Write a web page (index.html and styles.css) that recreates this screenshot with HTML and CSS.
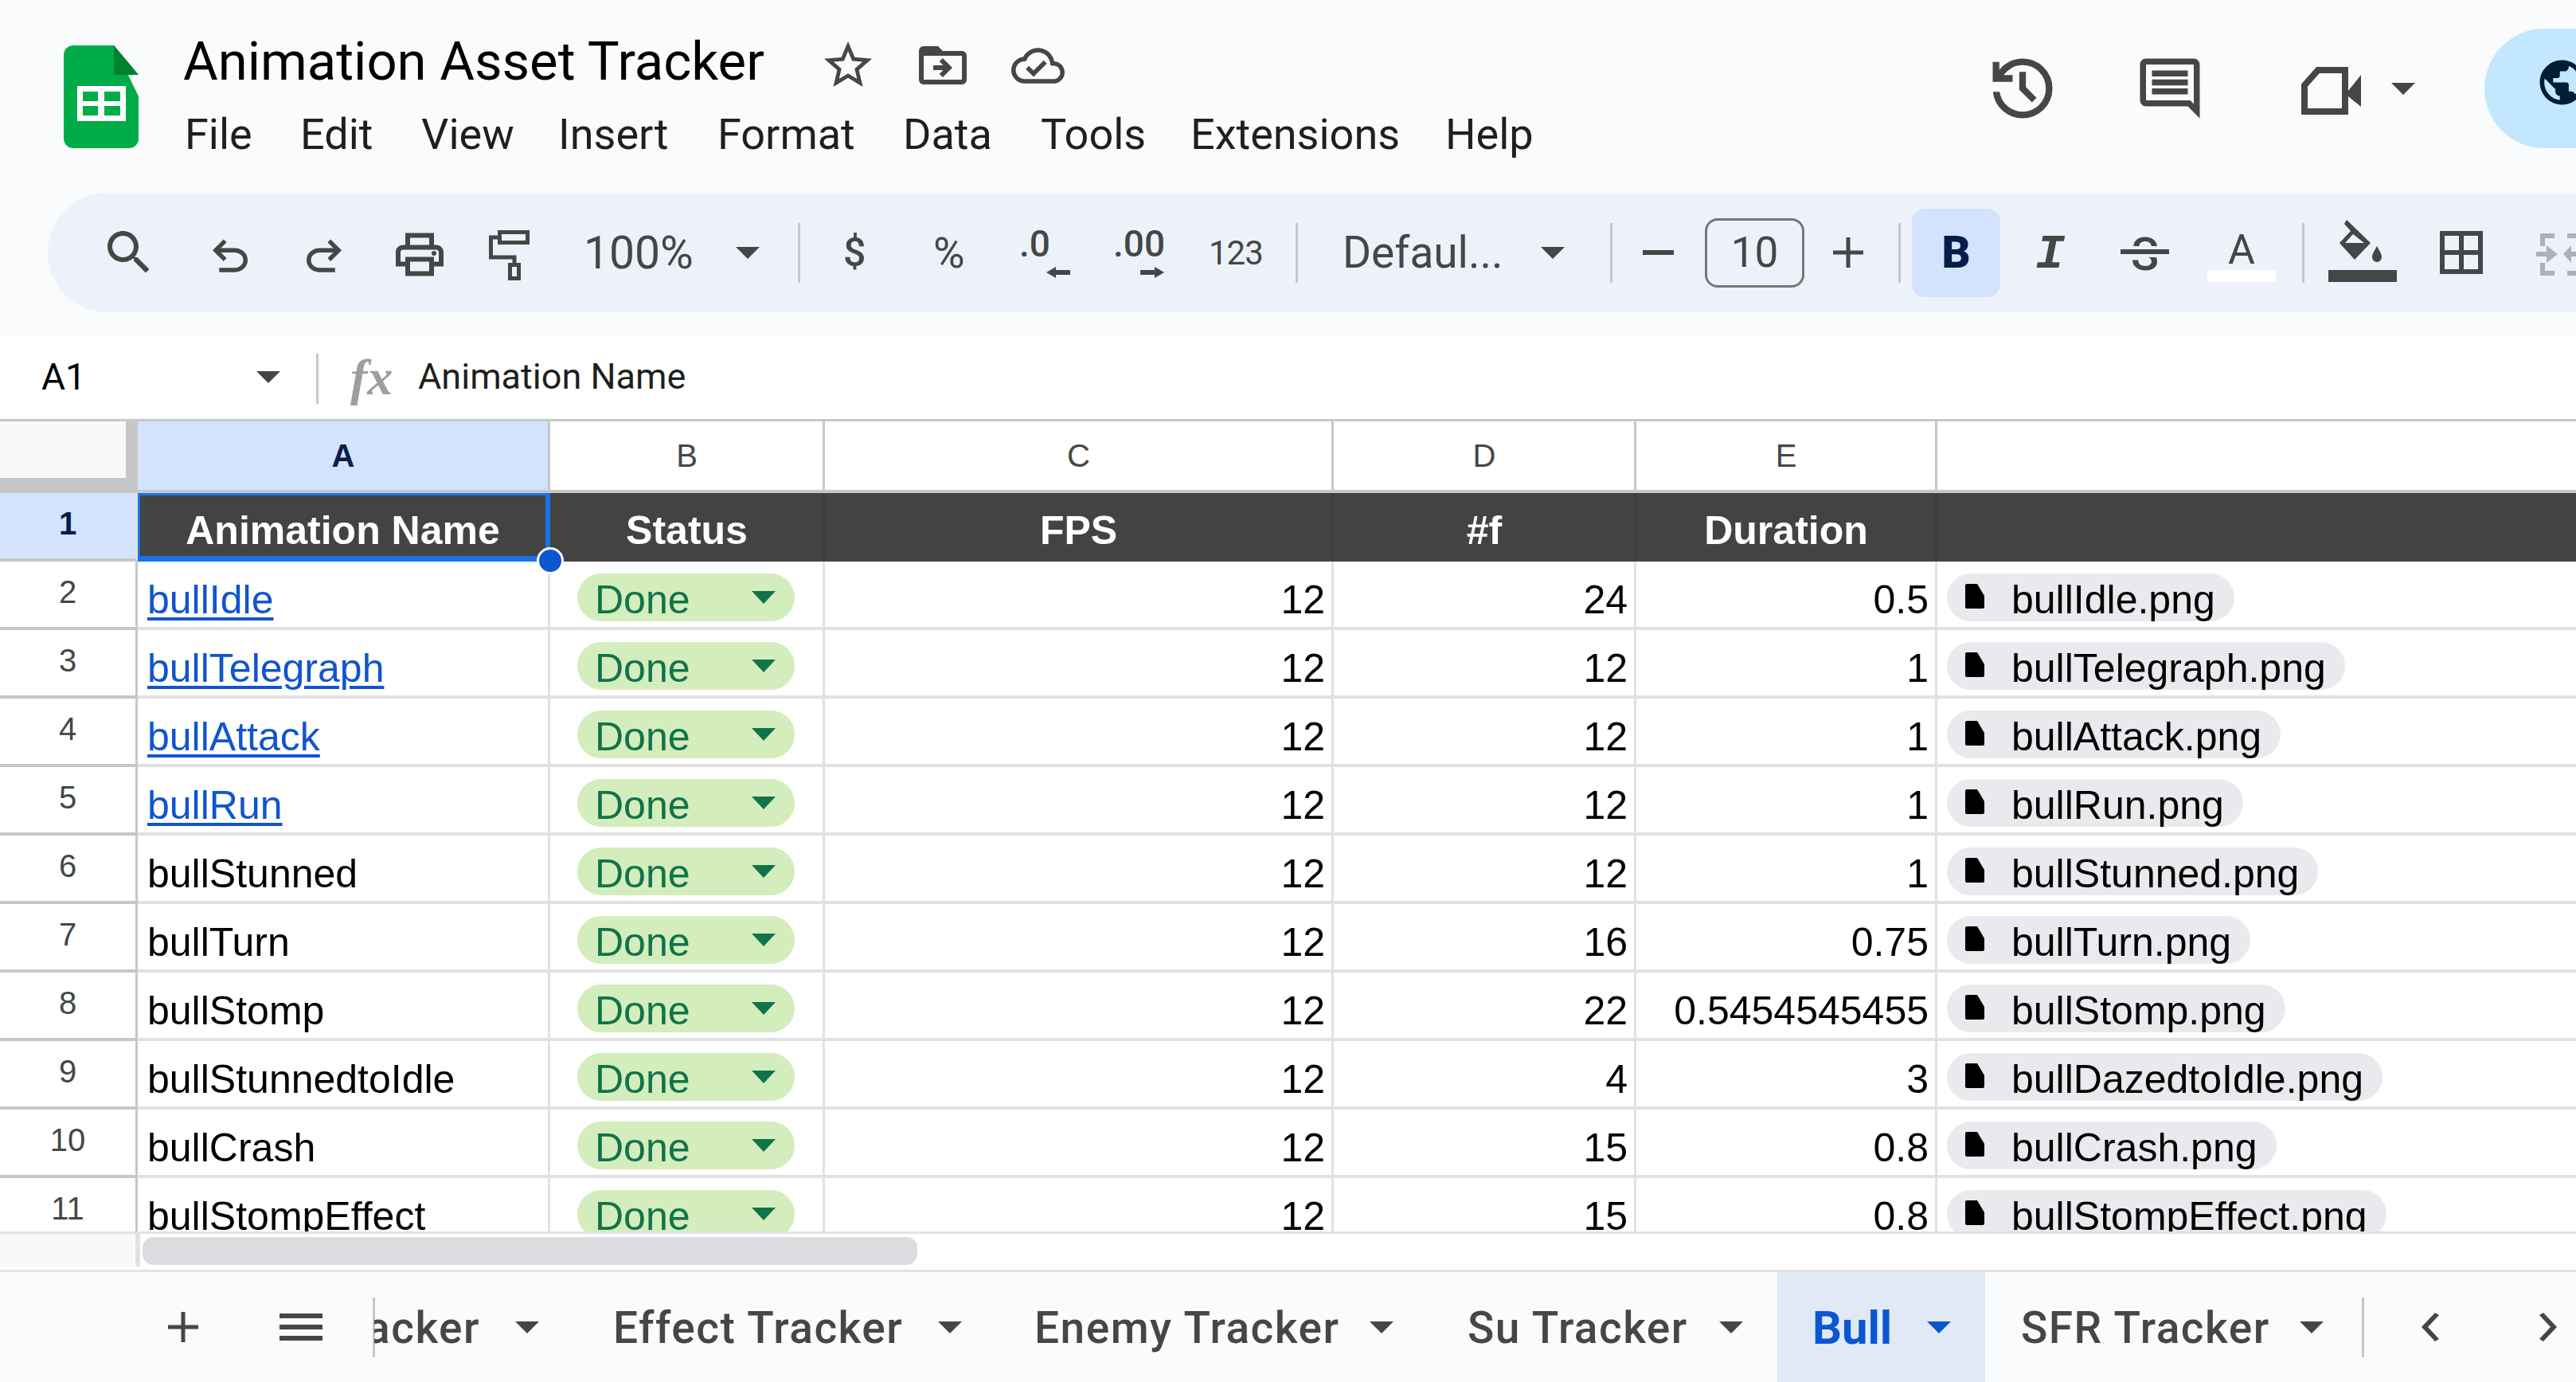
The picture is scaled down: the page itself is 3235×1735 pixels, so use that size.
FILE: index.html
```html
<!DOCTYPE html>
<html lang="en">
<head>
<meta charset="utf-8">
<title>Animation Asset Tracker</title>
<link rel="stylesheet" href="styles.css">
</head>
<body>
<header class="top">
  <svg class="logo" viewBox="80 57 94 129"><path class="logo-body" d="M92 57H143L174 121V174a12 12 0 0 1-12 12H92a12 12 0 0 1-12-12V69a12 12 0 0 1 12-12z"/><path class="logo-fold" d="M143 57v37h31V121L174 94z"/><path class="logo-fold" d="M143 57L174 94H143z"/><path class="logo-table" d="M97 108h61v44H97zM104 115v12h19v-12zM131 115v12h20v-12zM104 133v12h19v-12zM131 133v12h20v-12z" fill-rule="evenodd"/></svg>
  <div class="doc">
    <div class="title-row">
      <span class="title">Animation Asset Tracker</span>
      <svg class="ic hd star" viewBox="0 0 24 24"><path d="M22 9.24l-7.19-.62L12 2 9.19 8.63 2 9.24l5.46 4.73L5.82 21 12 17.27 18.18 21l-1.63-7.03L22 9.24zM12 15.4l-3.76 2.27 1-4.28-3.32-2.88 4.38-.38L12 6.1l1.71 4.04 4.38.38-3.32 2.88 1 4.28L12 15.4z"/></svg>
      <svg class="ic hd folder" viewBox="0 0 24 24"><path d="M20 6h-8l-2-2H4c-1.1 0-1.99.9-1.99 2L2 18c0 1.1.9 2 2 2h16c1.1 0 2-.9 2-2V8c0-1.1-.9-2-2-2zm0 12H4V8h16v10zm-8.01-9l-1.41 1.41L12.16 12H8v2h4.16l-1.59 1.59L11.99 17 16 13.01 11.99 9z"/></svg>
      <svg class="ic cloud" viewBox="0 0 24 24"><path d="M19.35 10.04C18.67 6.59 15.64 4 12 4 9.11 4 6.6 5.64 5.35 8.04 2.34 8.36 0 10.91 0 14c0 3.31 2.69 6 6 6h13c2.76 0 5-2.24 5-5 0-2.64-2.05-4.78-4.65-4.96zM19 18H6c-2.21 0-4-1.79-4-4 0-2.05 1.53-3.76 3.56-3.97l1.07-.11.5-.95C8.08 7.14 9.94 6 12 6c2.62 0 4.88 1.86 5.39 4.43l.3 1.5 1.53.11c1.56.1 2.78 1.41 2.78 2.96 0 1.65-1.35 3-3 3zm-9-3.82l-2.09-2.09L6.5 13.5 10 17l6.01-6.01-1.41-1.41z"/></svg>
    </div>
    <nav class="menu"><span>File</span><span>Edit</span><span>View</span><span>Insert</span><span>Format</span><span>Data</span><span>Tools</span><span>Extensions</span><span>Help</span></nav>
  </div>
  <div class="actions">
    <svg class="ic history" viewBox="0 -960 960 960"><path d="M480-120q-138 0-240.5-91.5T122-440h82q14 104 92.5 172T480-200q117 0 198.5-81.5T760-480q0-117-81.5-198.5T480-760q-69 0-129 32t-101 88h110v80H120v-240h80v94q51-64 124.5-99T480-840q150 0 255 105t105 255q0 150-105 255T480-120Zm112-192L440-464v-216h80v184l128 128-56 56Z"/></svg>
    <svg class="ic comment" viewBox="0 0 24 24"><path d="M21.99 4c0-1.1-.89-2-1.99-2H4c-1.1 0-2 .9-2 2v12c0 1.1.9 2 2 2h14l4 4-.01-18zM20 4v13.17L18.83 16H4V4h16zM6 12h12v2H6zm0-3h12v2H6zm0-3h12v2H6z"/></svg>
    <svg class="ic video" viewBox="2880 60 100 100"><path class="line8" d="M2911 87H2945V139H2894V106z"/><path d="M2949 113L2965 93V133L2949 120z"/></svg>
    <i class="tri video-tri"></i>
    <div class="share"><svg class="globe" viewBox="0 0 24 24"><path d="M12 2C6.48 2 2 6.48 2 12s4.48 10 10 10 10-4.48 10-10S17.52 2 12 2zm-1 17.93c-3.95-.49-7-3.85-7-7.93 0-.62.08-1.21.21-1.79L9 15v1c0 1.1.9 2 2 2v1.93zm6.9-2.54c-.26-.81-1-1.39-1.9-1.39h-1v-3c0-.55-.45-1-1-1H8v-2h2c.55 0 1-.45 1-1V7h2c1.1 0 2-.9 2-2v-.41c2.93 1.19 5 4.06 5 7.41 0 2.08-.8 3.97-2.1 5.39z"/></svg></div>
  </div>
</header>

<div class="toolbar">
  <svg class="ic" viewBox="0 0 24 24"><path d="M15.5 14h-.79l-.28-.27C15.41 12.59 16 11.11 16 9.5 16 5.91 13.09 3 9.5 3S3 5.91 3 9.5 5.91 16 9.5 16c1.61 0 3.09-.59 4.23-1.57l.27.28v.79l5 4.99L20.49 19l-4.99-5zm-6 0C7.01 14 5 11.99 5 9.5S7.01 5 9.5 5 14 7.01 14 9.5 11.99 14 9.5 14z"/></svg>
  <svg class="ic undo" viewBox="0 -1039 960 960"><path d="M280-200v-80h284q63 0 109.5-40T720-420q0-60-46.5-100T564-560H312l104 104-56 56-200-200 200-200 56 56-104 104h252q97 0 166.5 63T800-420q0 94-69.5 157T564-200H280Z"/></svg>
  <svg class="ic undo" viewBox="0 -1039 960 960"><path d="M396-200q-97 0-166.5-63T160-420q0-94 69.5-157T396-640h252L544-744l56-56 200 200-200 200-56-56 104-104H396q-63 0-109.5 40T240-420q0 60 46.5 100T396-280h284v80H396Z"/></svg>
  <svg class="ic" viewBox="0 -0.8 24 24"><path d="M19 8h-1V3H6v5H5c-1.66 0-3 1.34-3 3v6h4v4h12v-4h4v-6c0-1.66-1.34-3-3-3zM8 5h8v3H8V5zm8 12v2H8v-4h8v2zm2-2v-2H6v2H4v-4c0-.55.45-1 1-1h14c.55 0 1 .45 1 1v4h-2z"/><circle cx="18" cy="11.5" r="1"/></svg>
  <svg class="ic" viewBox="604 281 72 72"><path class="line5" d="M627.5 291.5h35v13h-35zM625 298H616.5V323H646V332M640.5 332.5h11v17h-11z"/></svg>
  <span class="tb-text zoom">100%</span>
  <i class="tri"></i>
  <i class="divider"></i>
  <span class="tb-text sym dollar">$</span>
  <span class="tb-text sym percent">%</span>
  <div class="dec"><span class="dec-text">.0</span><svg class="dec-arrow" viewBox="0 0 30 14"><path d="M0 7L12 0V4H30V10H12V14z"/></svg></div>
  <div class="dec"><span class="dec-text">.00</span><svg class="dec-arrow" viewBox="0 0 30 14"><path d="M30 7L18 0V4H0V10H18V14z"/></svg></div>
  <span class="tb-text num">123</span>
  <i class="divider"></i>
  <span class="tb-text font">Defaul...</span>
  <i class="tri"></i>
  <i class="divider"></i>
  <svg class="minus" viewBox="0 0 39 6"><path d="M0 0h39v6H0z"/></svg>
  <div class="size">10</div>
  <svg class="plus" viewBox="0 0 38 38"><path d="M16.500 0h5v16.500H38v5H21.500V38h-5V21.500H0v-5h16.500z"/></svg>
  <i class="divider"></i>
  <div class="bold-btn">B</div>
  <span class="tb-text italic">I</span>
  <div class="strike"><span class="tb-text strike-s">S</span></div>
  <div class="color-a"><span class="a-letter">A</span><i class="a-bar"></i></div>
  <i class="divider"></i>
  <svg class="fill" viewBox="2924 270 86 90"><path fill-rule="evenodd" d="M2947 276L2977 305 2957 326 2938 305 2952 290 2944 281zM2955 294L2945 305H2969z"/><path d="M2985 309c3 6 6 9 6 14a6 6 0 0 1-12 0c0-5 3-8 6-14z"/><path d="M2924 339h86v15h-86z"/></svg>
  <svg class="ic" viewBox="0 0 24 24"><path d="M3 3v18h18V3H3zm8 16H5v-6h6v6zm0-8H5V5h6v6zm8 8h-6v-6h6v6zm0-8h-6V5h6v6z"/></svg>
  <svg class="ic merge" viewBox="3179 281 72 72"><path d="M3190 293h18v6h-12v10h-6zM3190 330h6v10h12v6h-18zM3224 293h18v6h-18zM3224 340h18v6h-18zM3185 316h13v-8l14 11-14 11v-8h-13zM3235 316h-6v-8l-10 11 10 11v-8h6z"/></svg>
</div>

<div class="formula">
  <span class="a1">A1</span>
  <i class="tri"></i>
  <i class="divider tall"></i>
  <span class="fx">fx</span>
  <span class="formula-text">Animation Name</span>
</div>

<main class="sheet">
  <div class="grid-row col-row">
    <div class="corner"></div>
    <div class="col-h sel">A</div><div class="col-h">B</div><div class="col-h">C</div><div class="col-h">D</div><div class="col-h">E</div><div class="col-h"></div>
  </div>
  <div class="rows">
    <div class="grid-row head-row">
      <div class="row-h sel">1</div>
      <div class="hd-cell active">Animation Name<i class="handle"></i></div><div class="hd-cell">Status</div><div class="hd-cell">FPS</div><div class="hd-cell">#f</div><div class="hd-cell">Duration</div><div class="hd-cell"></div>
    </div>
    <div class="grid-row"><div class="row-h">2</div><div class="cell"><span class="link">bullIdle</span></div><div class="cell pill"><span class="done">Done<i class="tri green"></i></span></div><div class="cell n">12</div><div class="cell n">24</div><div class="cell n">0.5</div><div class="cell pill"><span class="file"><svg class="doc-ic" viewBox="0 0 24 31"><path d="M2 0H15L24 15V29a2 2 0 0 1-2 2H2a2 2 0 0 1-2-2V2a2 2 0 0 1 2-2z"/></svg>bullIdle.png</span></div></div>
    <div class="grid-row"><div class="row-h">3</div><div class="cell"><span class="link">bullTelegraph</span></div><div class="cell pill"><span class="done">Done<i class="tri green"></i></span></div><div class="cell n">12</div><div class="cell n">12</div><div class="cell n">1</div><div class="cell pill"><span class="file"><svg class="doc-ic" viewBox="0 0 24 31"><path d="M2 0H15L24 15V29a2 2 0 0 1-2 2H2a2 2 0 0 1-2-2V2a2 2 0 0 1 2-2z"/></svg>bullTelegraph.png</span></div></div>
    <div class="grid-row"><div class="row-h">4</div><div class="cell"><span class="link">bullAttack</span></div><div class="cell pill"><span class="done">Done<i class="tri green"></i></span></div><div class="cell n">12</div><div class="cell n">12</div><div class="cell n">1</div><div class="cell pill"><span class="file"><svg class="doc-ic" viewBox="0 0 24 31"><path d="M2 0H15L24 15V29a2 2 0 0 1-2 2H2a2 2 0 0 1-2-2V2a2 2 0 0 1 2-2z"/></svg>bullAttack.png</span></div></div>
    <div class="grid-row"><div class="row-h">5</div><div class="cell"><span class="link">bullRun</span></div><div class="cell pill"><span class="done">Done<i class="tri green"></i></span></div><div class="cell n">12</div><div class="cell n">12</div><div class="cell n">1</div><div class="cell pill"><span class="file"><svg class="doc-ic" viewBox="0 0 24 31"><path d="M2 0H15L24 15V29a2 2 0 0 1-2 2H2a2 2 0 0 1-2-2V2a2 2 0 0 1 2-2z"/></svg>bullRun.png</span></div></div>
    <div class="grid-row"><div class="row-h">6</div><div class="cell">bullStunned</div><div class="cell pill"><span class="done">Done<i class="tri green"></i></span></div><div class="cell n">12</div><div class="cell n">12</div><div class="cell n">1</div><div class="cell pill"><span class="file"><svg class="doc-ic" viewBox="0 0 24 31"><path d="M2 0H15L24 15V29a2 2 0 0 1-2 2H2a2 2 0 0 1-2-2V2a2 2 0 0 1 2-2z"/></svg>bullStunned.png</span></div></div>
    <div class="grid-row"><div class="row-h">7</div><div class="cell">bullTurn</div><div class="cell pill"><span class="done">Done<i class="tri green"></i></span></div><div class="cell n">12</div><div class="cell n">16</div><div class="cell n">0.75</div><div class="cell pill"><span class="file"><svg class="doc-ic" viewBox="0 0 24 31"><path d="M2 0H15L24 15V29a2 2 0 0 1-2 2H2a2 2 0 0 1-2-2V2a2 2 0 0 1 2-2z"/></svg>bullTurn.png</span></div></div>
    <div class="grid-row"><div class="row-h">8</div><div class="cell">bullStomp</div><div class="cell pill"><span class="done">Done<i class="tri green"></i></span></div><div class="cell n">12</div><div class="cell n">22</div><div class="cell n">0.5454545455</div><div class="cell pill"><span class="file"><svg class="doc-ic" viewBox="0 0 24 31"><path d="M2 0H15L24 15V29a2 2 0 0 1-2 2H2a2 2 0 0 1-2-2V2a2 2 0 0 1 2-2z"/></svg>bullStomp.png</span></div></div>
    <div class="grid-row"><div class="row-h">9</div><div class="cell">bullStunnedtoIdle</div><div class="cell pill"><span class="done">Done<i class="tri green"></i></span></div><div class="cell n">12</div><div class="cell n">4</div><div class="cell n">3</div><div class="cell pill"><span class="file"><svg class="doc-ic" viewBox="0 0 24 31"><path d="M2 0H15L24 15V29a2 2 0 0 1-2 2H2a2 2 0 0 1-2-2V2a2 2 0 0 1 2-2z"/></svg>bullDazedtoIdle.png</span></div></div>
    <div class="grid-row"><div class="row-h">10</div><div class="cell">bullCrash</div><div class="cell pill"><span class="done">Done<i class="tri green"></i></span></div><div class="cell n">12</div><div class="cell n">15</div><div class="cell n">0.8</div><div class="cell pill"><span class="file"><svg class="doc-ic" viewBox="0 0 24 31"><path d="M2 0H15L24 15V29a2 2 0 0 1-2 2H2a2 2 0 0 1-2-2V2a2 2 0 0 1 2-2z"/></svg>bullCrash.png</span></div></div>
    <div class="grid-row"><div class="row-h">11</div><div class="cell">bullStompEffect</div><div class="cell pill"><span class="done">Done<i class="tri green"></i></span></div><div class="cell n">12</div><div class="cell n">15</div><div class="cell n">0.8</div><div class="cell pill"><span class="file"><svg class="doc-ic" viewBox="0 0 24 31"><path d="M2 0H15L24 15V29a2 2 0 0 1-2 2H2a2 2 0 0 1-2-2V2a2 2 0 0 1 2-2z"/></svg>bullStompEffect.png</span></div></div>
  </div>
  <div class="scroll-row"><div class="scroll-corner"></div><div class="thumb"></div></div>
</main>

<footer class="tabs">
  <svg class="tab-plus" viewBox="0 0 38 38"><path d="M16.500 0h5v16.500H38v5H21.500V38h-5V21.500H0v-5h16.500z"/></svg>
  <svg class="tab-menu" viewBox="0 0 54 34"><path d="M0 0h54v6H0zM0 14h54v6H0zM0 28h54v6H0z"/></svg>
  <i class="divider tall-tab"></i>
  <div class="clip"><span class="tab-label">Tracker</span></div>
  <i class="tri"></i>
  <span class="tab-label">Effect Tracker</span>
  <i class="tri"></i>
  <span class="tab-label">Enemy Tracker</span>
  <i class="tri"></i>
  <span class="tab-label">Su Tracker</span>
  <i class="tri"></i>
  <div class="tab-active"><span class="tab-label blue">Bull</span><i class="tri blue-tri"></i></div>
  <span class="tab-label">SFR Tracker</span>
  <i class="tri"></i>
  <i class="divider tall-tab"></i>
  <svg class="chev" viewBox="0 0 22 36"><path d="M17 0l5 3L8 18l14 15-5 3L0 18z"/></svg>
  <svg class="chev" viewBox="0 0 22 36"><path d="M5 0L0 3l14 15L0 33l5 3 17-18z"/></svg>
</footer>
</body>
</html>
```
FILE: styles.css
```css
* { box-sizing: border-box; }
html, body { margin: 0; padding: 0; width: 3235px; height: 1735px; overflow: hidden; background: #f9fbfd; }
body { font-family: "Liberation Sans", Arial, sans-serif; color: #000; }
i { display: block; }
svg { display: block; overflow: visible; fill: #444746; }

.ic { width: 72px; height: 72px; flex: none; }
.tri { width: 0; height: 0; flex: none; border-left: 15px solid transparent; border-right: 15px solid transparent; border-top: 15px solid #444746; }
.divider { width: 3px; height: 75px; background: #c7c7c7; }

/* top bar */
.top { height: 242px; display: flex; padding-left: 80px; background: #f9fbfd; }
.logo { width: 94px; height: 129px; margin-top: 57px; flex: none; }
.logo-body { fill: #00ac47; }
.logo-fold { fill: #00832d; }
.logo-table { fill: #fff; }
.doc { margin-left: 56px; padding-top: 46px; }
.title-row { display: flex; height: 72px; }
.title { font-family: Roboto, sans-serif; font-size: 67px; line-height: 62px; width: 799px; color: #000; white-space: nowrap; }
.star { margin-right: 47px; }
.folder { margin-right: 50px; }
.cloud { width: 67px; height: 67px; margin-top: 3px; }
.menu { display: grid; grid-template-columns: 145px 152px 172px 200px 233px 173px 188px 320px auto; margin-top: 21px; margin-left: 2px; font-family: Roboto, sans-serif; font-size: 54px; line-height: 60px; color: #1f1f1f; }
.actions { position: absolute; left: 2490px; top: 36px; display: flex; align-items: center; height: 150px; }
.history { width: 100px; height: 100px; }
.comment { width: 90px; height: 90px; margin-left: 90px; }
.video { width: 100px; height: 100px; margin-left: 110px; }
.line8 { fill: none; stroke: #444746; stroke-width: 8; }
.line5 { fill: none; stroke: #444746; stroke-width: 5; }
.video-tri { margin-left: 23px; }
.share { width: 115px; height: 150px; margin-left: 87px; flex: none; background: #c2e7ff; border-radius: 75px 0 0 75px; overflow: hidden; padding: 34px 0 0 64px; }
.globe { width: 67px; height: 67px; fill: #001d35; }

/* toolbar */
.toolbar { height: 150px; margin-left: 60px; width: 3175px; border-radius: 75px 0 0 75px; background: #edf2fa; padding-left: 66px; display: grid; align-items: center; grid-template-columns: 130px 118px 117px 113px 127px 193px 78px 56px 112px 110px 118px 119px 110px 56px 252px 87px 41px 78px 161px 82px 17px 139px 115px 117px 119px 33px 131px 124px 80px; }
.undo { width: 66px; height: 66px; }
.tb-text { font-family: Roboto, sans-serif; color: #444746; white-space: nowrap; }
.zoom { font-size: 57px; padding-left: 2px; }
.sym { font-weight: 500; }
.dollar { font-size: 50px; padding-left: 1px; }
.percent { font-size: 54px; padding-left: 2px; font-weight: 400; }
.num { font-size: 42px; letter-spacing: -1px; padding-left: 1px; }
.font { font-size: 55px; padding-left: 3px; }
.dec { display: flex; flex-direction: column; align-items: flex-end; width: 64px; height: 64px; font-family: Roboto, sans-serif; color: #444746; }
.dec-text { align-self: flex-start; font-size: 46px; font-weight: 500; line-height: 42px; white-space: nowrap; }
.dec-arrow { width: 30px; height: 14px; margin-top: 8px; }
.minus { width: 39px; height: 6px; }
.size { width: 125px; height: 87px; border: 3px solid #747775; border-radius: 16px; display: flex; align-items: center; justify-content: center; font-family: Roboto, sans-serif; font-size: 53px; color: #444746; }
.plus { width: 38px; height: 38px; }
.bold-btn { width: 111px; height: 111px; border-radius: 16px; background: #d3e3fd; color: #041e49; font-family: Roboto, sans-serif; font-weight: 900; font-size: 56px; display: flex; align-items: center; justify-content: center; }
.italic { font-family: "Liberation Mono", monospace; font-weight: 700; font-style: italic; font-size: 62px; padding-left: 16px; margin-top: 4px; }
.strike { position: relative; width: 61px; margin-left: 8px; margin-top: 4px; text-align: center; }
.strike-s { font-size: 58px; font-weight: 500; }
.strike::after { content: ""; position: absolute; left: 0; right: 0; top: 28px; height: 6px; background: #444746; box-shadow: 0 0 0 4px #edf2fa; clip-path: inset(-4px 0); }
.color-a { width: 86px; height: 64px; margin-top: 10px; display: flex; flex-direction: column; align-items: center; }
.a-letter { font-family: Roboto, sans-serif; font-size: 52px; line-height: 48px; color: #444746; }
.a-bar { width: 86px; height: 15px; margin-top: 1px; background: #fff; }
.fill { width: 86px; height: 90px; margin-top: -4px; }
.merge { fill: #aeb0b3; }

/* formula bar */
.formula { margin-top: 30px; height: 104px; background: #fff; padding-left: 52px; display: grid; align-items: center; grid-template-columns: 270px 75px 43px 85px auto; }
.a1 { font-family: Roboto, sans-serif; font-size: 46px; color: #000; margin-top: -3px; }
.formula .tri { margin-top: -2px; }
.tall { height: 63px; margin-top: 2px; }
.fx { font-family: "Liberation Serif", serif; font-style: italic; font-weight: 700; font-size: 64px; line-height: 60px; color: #9e9e9e; }
.formula-text { font-family: Roboto, sans-serif; font-size: 45px; color: #1f1f1f; margin-top: -3px; }

/* sheet */
.sheet { background: #fff; }
.grid-row { display: grid; grid-template-columns: 173px 518px 345px 639px 380px 378px 1fr; height: 86px; font-size: 50px; }
.col-row { height: 93px; border-top: 3px solid #c7c7c7; }
.corner { background: #f8f9fa; border-right: 15px solid #c7c7c7; border-bottom: 19px solid #c7c7c7; }
.col-h { border-right: 3px solid #c7c7c7; border-bottom: 4px solid #c7c7c7; font-size: 40px; color: #444746; text-align: center; line-height: 86px; padding-left: 1px; }
.col-h.sel { background: #d3e3fd; color: #041e49; font-weight: 700; }
.col-h:last-child, .cell:last-child, .hd-cell:last-child { border-right: 0; }
.rows { height: 927px; overflow: hidden; position: relative; }
.row-h { border-right: 3px solid #c7c7c7; border-bottom: 4px solid #c7c7c7; font-size: 40px; color: #444746; text-align: center; line-height: 77px; }
.row-h.sel { background: #d3e3fd; color: #041e49; font-weight: 700; border-right-color: #e1e1e1; }
.cell { border-right: 3px solid #e1e1e1; border-bottom: 4px solid #e1e1e1; padding: 21px 8px 0 12px; line-height: 54px; white-space: nowrap; overflow: hidden; }
.cell.n { text-align: right; }
.cell.pill { padding: 15px 0 0 12px; overflow: visible; }
.cell.pill:nth-child(3) { padding-left: 34px; }
.link { color: #1155cc; text-decoration: underline; text-decoration-thickness: 4px; text-underline-offset: 5px; }
.done { display: flex; justify-content: space-between; width: 273px; height: 60px; border-radius: 30px; padding: 6px 24px 0 22px; background: #d4edbc; color: #11734b; }
.tri.green { border-top: 16px solid #11734b; margin-top: 16px; }
.file { display: inline-flex; height: 60px; border-radius: 30px; padding: 6px 24px 0 23px; background: #e8eaed; }
.doc-ic { width: 24px; height: 31px; margin: 7px 34px 0 0; fill: #000; }
.head-row { background: #434343; }
.hd-cell { border-right: 3px solid #3e3e3e; font-size: 50px; font-weight: 700; color: #fff; text-align: center; line-height: 54px; padding-top: 20px; padding-left: 1px; position: relative; }
.hd-cell.active { border: solid #1a73e8; border-width: 3px 6px 7px 3px; padding-top: 17px; padding-left: 0; }
.handle { position: absolute; right: -23px; bottom: -23px; width: 34px; height: 34px; border-radius: 50%; background: #0b57d0; border: 3px solid #fff; }
.scroll-row { height: 51px; border-top: 3px solid #e1e3e1; border-bottom: 3px solid #e1e3e1; background: #fff; display: flex; }
.scroll-corner { width: 176px; height: 41px; background: #f8f9fa; border-right: 6px solid #e1e3e1; }
.thumb { width: 973px; height: 35px; margin: 4px 0 0 3px; border-radius: 14px; background: #dadce0; }

/* sheet tabs */
.tabs { height: 138px; background: #f9fbfd; padding-left: 210px; display: grid; align-items: center; grid-template-columns: 141px 117px 2px 177px 123px 408px 121px 421px 123px 316px 73px 306px 350px 78px 75px 148px auto; }
.tab-plus { width: 40px; height: 38px; }
.tab-menu { width: 54px; height: 34px; }
.tall-tab { height: 75px; }
.clip { width: 133px; display: flex; justify-content: flex-end; overflow: hidden; }
.tab-label { font-family: Roboto, sans-serif; font-size: 55px; font-weight: 500; color: #444746; white-space: nowrap; letter-spacing: 1.5px; padding-top: 2px; }
.tab-active { align-self: stretch; width: 261px; background: #e1e9f7; padding-left: 44px; display: flex; align-items: center; gap: 44px; }
.tab-label.blue { color: #0b57d0; font-weight: 700; font-size: 58px; letter-spacing: 0; }
.blue-tri { border-top-color: #0b57d0; }
.chev { width: 22px; height: 36px; }
```
